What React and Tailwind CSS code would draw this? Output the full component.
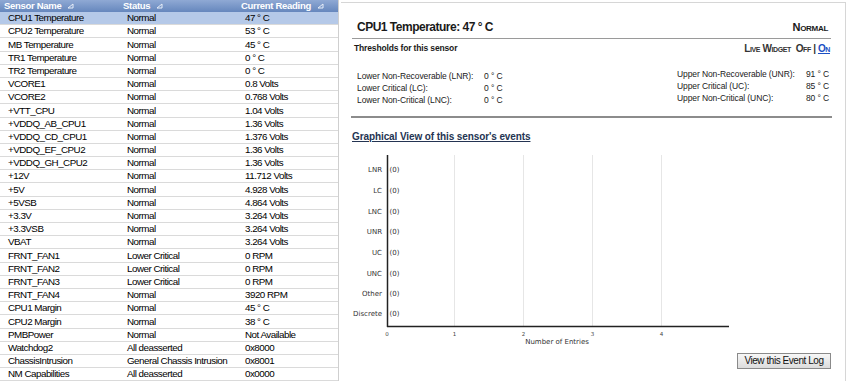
import React from "react";

const rows = [
  ["CPU1 Temperature", "Normal", "47 ° C"],
  ["CPU2 Temperature", "Normal", "53 ° C"],
  ["MB Temperature", "Normal", "45 ° C"],
  ["TR1 Temperature", "Normal", "0 ° C"],
  ["TR2 Temperature", "Normal", "0 ° C"],
  ["VCORE1", "Normal", "0.8 Volts"],
  ["VCORE2", "Normal", "0.768 Volts"],
  ["+VTT_CPU", "Normal", "1.04 Volts"],
  ["+VDDQ_AB_CPU1", "Normal", "1.36 Volts"],
  ["+VDDQ_CD_CPU1", "Normal", "1.376 Volts"],
  ["+VDDQ_EF_CPU2", "Normal", "1.36 Volts"],
  ["+VDDQ_GH_CPU2", "Normal", "1.36 Volts"],
  ["+12V", "Normal", "11.712 Volts"],
  ["+5V", "Normal", "4.928 Volts"],
  ["+5VSB", "Normal", "4.864 Volts"],
  ["+3.3V", "Normal", "3.264 Volts"],
  ["+3.3VSB", "Normal", "3.264 Volts"],
  ["VBAT", "Normal", "3.264 Volts"],
  ["FRNT_FAN1", "Lower Critical", "0 RPM"],
  ["FRNT_FAN2", "Lower Critical", "0 RPM"],
  ["FRNT_FAN3", "Lower Critical", "0 RPM"],
  ["FRNT_FAN4", "Normal", "3920 RPM"],
  ["CPU1 Margin", "Normal", "45 ° C"],
  ["CPU2 Margin", "Normal", "38 ° C"],
  ["PMBPower", "Normal", "Not Available"],
  ["Watchdog2", "All deasserted", "0x8000"],
  ["ChassisIntrusion", "General Chassis Intrusion", "0x8001"],
  ["NM Capabilities", "All deasserted", "0x0000"],
];

function Tri() {
  return (
    <svg width="7" height="6" viewBox="0 0 7 6" className="inline-block ml-[6px] -mt-[2px]">
      <path d="M1 5 L6 5 L6 1 Z" fill="none" stroke="#e8eef8" strokeWidth="1" />
    </svg>
  );
}

const cats = [
  ["LNR", 20],
  ["LC", 41],
  ["LNC", 62],
  ["UNR", 82],
  ["UC", 103],
  ["UNC", 124],
  ["Other", 144],
  ["Discrete", 164],
];

function Chart() {
  const grid = [102.5, 171.5, 240.5, 309.5];
  const ticks = [35, 102.5, 171.5, 240.5, 309.5];
  return (
    <svg width="400" height="196" viewBox="0 0 400 196" className="block" style={{ fontFamily: "'DejaVu Sans', sans-serif" }}>
      {grid.map((x) => (
        <line key={x} x1={x} y1="6" x2={x} y2="177" stroke="#e6e6e6" strokeWidth="1" />
      ))}
      <line x1="35.5" y1="6" x2="35.5" y2="178" stroke="#222" strokeWidth="1.5" />
      <line x1="35" y1="177.5" x2="377" y2="177.5" stroke="#222" strokeWidth="1.5" />
      {cats.map(([t, y]) => (
        <g key={t}>
          <text x="30" y={y + 2.5} textAnchor="end" fontSize="7" fill="#333">{t}</text>
          <text x="37.5" y={y + 2.5} fontSize="7" fill="#333">(0)</text>
        </g>
      ))}
      {ticks.map((x, i) => (
        <text key={i} x={x} y="187" textAnchor="middle" fontSize="5.5" fill="#444">{i}</text>
      ))}
      <text x="205" y="195" textAnchor="middle" fontSize="7" fill="#333">Number of Entries</text>
    </svg>
  );
}

export default function App() {
  return (
    <div
      className="flex h-[381px] w-[850px] overflow-hidden bg-white text-black"
      style={{ fontFamily: "'Liberation Sans', Arial, sans-serif" }}
    >
      {/* Left sensor table */}
      <div className="w-[339px] shrink-0 border-r border-[#cfcfcf]">
        <div className="grid h-[12px] grid-cols-[119px_118px_1fr] items-center bg-linear-to-b from-[#8fa9d4] to-[#6687bd] text-[9.5px] font-bold leading-none tracking-[-0.3px] text-white">
          <div className="pl-[4px]">Sensor Name<Tri /></div>
          <div className="pl-[4px]">Status<Tri /></div>
          <div className="pl-[4px]">Current Reading<Tri /></div>
        </div>
        {rows.map((r, i) => (
          <div
            key={i}
            className={
              "grid h-[13.2px] grid-cols-[119px_118px_1fr] items-center border-b border-[#dadada] text-[9.8px] leading-none tracking-[-0.5px] " +
              (i === 0 ? "bg-[#b5c9e8]" : "bg-white")
            }
          >
            <div className="pl-[8px] whitespace-nowrap">{r[0]}</div>
            <div className="pl-[8px] whitespace-nowrap">{r[1]}</div>
            <div className="pl-[8px] whitespace-nowrap">{r[2]}</div>
          </div>
        ))}
      </div>

      {/* Right detail panel */}
      <div className="ml-[2px] mr-[4px] mt-[2px] flex-1 border-r border-t border-[#d6d6d6] pl-[11px] pr-[14px] text-[#1a1a1a]">
        <div className="flex items-end justify-between border-b border-[#9a9a9a] pb-[3px] pl-[5px] pr-[3px] pt-[17px]">
          <div className="text-[12px] font-bold leading-[15px] tracking-[-0.5px]">CPU1 Temperature: 47 ° C</div>
          <div className="text-[11px] font-bold leading-[15px] tracking-[-0.3px] [font-variant:small-caps]">Normal</div>
        </div>

        <div className="mt-[4px] flex items-center justify-between pl-[2px] pr-[1px] text-[8.5px] font-bold leading-[11px]">
          <div className="tracking-[-0.15px]">Thresholds for this sensor</div>
          <div className="text-[10px] tracking-[-0.4px] text-[#333] [font-variant:small-caps]">
            Live Widget&nbsp; Off | <span className="text-[#1b4fc4] underline">On</span>
          </div>
        </div>

        <div className="mt-[14px] flex items-start justify-between whitespace-nowrap pl-[5px] pr-[2px] text-[8.5px] leading-[12px] tracking-[-0.1px]">
          <div className="mt-[2px] grid grid-cols-[127px_auto]">
            <div>Lower Non-Recoverable (LNR):</div>
            <div>0 ° C</div>
            <div>Lower Critical (LC):</div>
            <div>0 ° C</div>
            <div>Lower Non-Critical (LNC):</div>
            <div>0 ° C</div>
          </div>
          <div className="grid grid-cols-[120px_32px]">
            <div>Upper Non-Recoverable (UNR):</div>
            <div className="text-right">91 ° C</div>
            <div>Upper Critical (UC):</div>
            <div className="text-right">85 ° C</div>
            <div>Upper Non-Critical (UNC):</div>
            <div className="text-right">80 ° C</div>
          </div>
        </div>

        <div className="ml-[-1px] mr-[-1px] mt-[10px] h-[2px] bg-[#8c8c8c]" />

        <div className="mt-[13px] text-[10px] font-bold leading-[12px] tracking-[-0.1px] text-[#243452] underline">
          Graphical View of this sensor's events
        </div>

        <div className="mt-[6px]">
          <Chart />
        </div>

        <div className="mt-[8px] flex justify-end">
          <button className="h-[16px] w-[94px] border border-[#8a8a8a] bg-linear-to-b from-[#f7f7f7] to-[#dcdcdc] text-[10px] leading-none tracking-[-0.45px] text-[#111]">
            View this Event Log
          </button>
        </div>
      </div>
    </div>
  );
}
